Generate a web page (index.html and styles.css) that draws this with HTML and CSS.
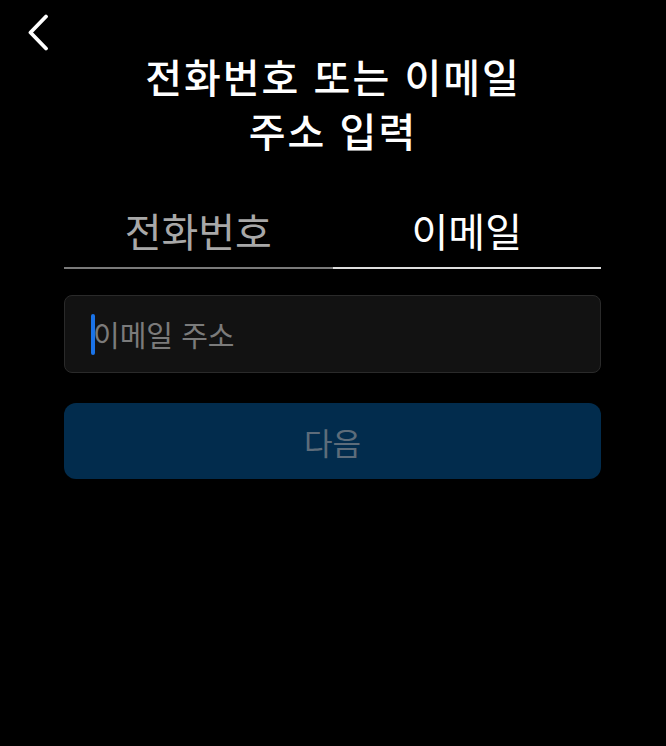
FILE: index.html
```html
<!DOCTYPE html>
<html lang="ko">
<head>
<meta charset="utf-8">
<title>전화번호 또는 이메일 주소 입력</title>
<link rel="stylesheet" href="styles.css">
</head>
<body>
<div class="screen">
  <header class="topbar">
    <button class="back" aria-label="뒤로">
      <svg width="22" height="37" viewBox="0 0 22 37"><path d="M19 2.5 L3.5 18.5 L19 34.5" fill="none" stroke="#fff" stroke-width="3.8" stroke-linecap="round" stroke-linejoin="round"/></svg>
    </button>
  </header>
  <h1 class="title">전화번호 또는 이메일<br>주소 입력</h1>
  <div class="content">
    <div class="tabs">
      <div class="tab">전화번호</div>
      <div class="tab active">이메일</div>
    </div>
    <div class="field">
      <span class="caret"></span>
      <span class="placeholder">이메일 주소</span>
    </div>
    <button class="next">다음</button>
  </div>
</div>
</body>
</html>
```
FILE: styles.css
```css
html, body {
  margin: 0;
  padding: 0;
  background: #000;
}
body {
  font-family: "Noto Sans CJK KR", "Noto Sans", sans-serif;
  color: #fff;
}
.screen {
  width: 666px;
  height: 746px;
  background: #000;
}
.topbar {
  height: 49px;
  display: flex;
  align-items: flex-start;
  padding: 14px 0 0 27px;
  box-sizing: border-box;
}
.back {
  background: none;
  border: 0;
  padding: 0;
  margin: 0;
  display: block;
  line-height: 0;
}
.title {
  margin: 0;
  font-size: 40px;
  font-weight: 500;
  letter-spacing: 2px;
  line-height: 54px;
  text-align: center;
  color: #fff;
}
.content {
  margin: 0 65px 0 64px;
}
.tabs {
  display: flex;
  margin-top: 48px;
}
.tab {
  flex: 1;
  text-align: center;
  font-size: 40px;
  font-weight: 400;
  line-height: 50px;
  padding-bottom: 12px;
  color: #a8a8a8;
  border-bottom: 2px solid #7a7a7a;
}
.tab.active {
  color: #fff;
  border-bottom-color: #dedede;
}
.field {
  margin-top: 26px;
  height: 78px;
  box-sizing: border-box;
  border: 1px solid #2a2a2a;
  border-radius: 8px;
  background: #121212;
  display: flex;
  align-items: center;
  padding-left: 26px;
}
.caret {
  width: 4px;
  height: 41px;
  border-radius: 2px;
  background: #1a73e8;
  margin-right: -2px;
}
.placeholder {
  font-size: 29px;
  color: #7b7b7b;
  line-height: 40px;
}
.next {
  display: block;
  width: 100%;
  margin-top: 30px;
  height: 76px;
  border: 0;
  border-radius: 12px;
  background: #022c4d;
  color: #5d6c7a;
  font-family: "Noto Sans CJK KR", "Noto Sans", sans-serif;
  font-size: 31px;
  padding: 0;
}
```
